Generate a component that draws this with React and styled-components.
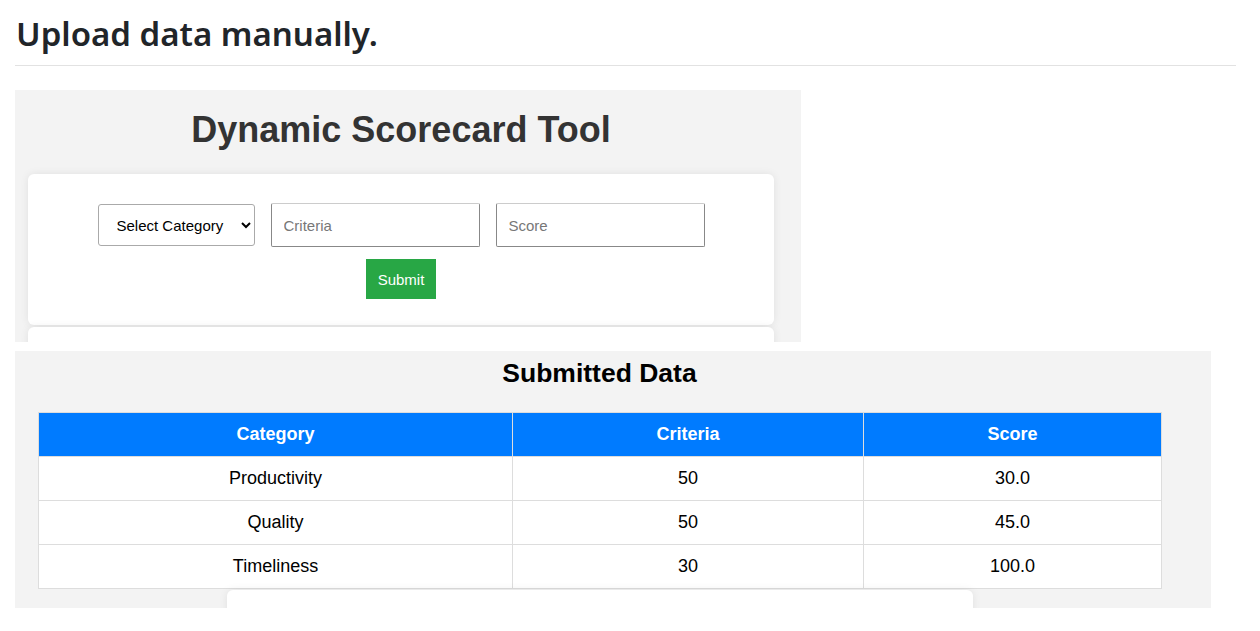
import React from 'react';
import styled, { createGlobalStyle } from 'styled-components';

const GlobalStyle = createGlobalStyle`
  body {
    margin: 0;
    background: #fff;
    font-family: "Liberation Sans", Arial, sans-serif;
  }
`

const rows = [
  { category: 'Productivity', criteria: '50', score: '30.0' },
  { category: 'Quality', criteria: '50', score: '45.0' },
  { category: 'Timeliness', criteria: '30', score: '100.0' },
];

const App = () => {
  return (
    <Page>
      <GlobalStyle />
      <PageTitle>Upload data manually.</PageTitle>
      <Rule />

      <FormFrame>
        <ToolTitle>Dynamic Scorecard Tool</ToolTitle>
        <Card>
          <FieldRow>
            <Select defaultValue="">
              <option value="">Select Category</option>
              <option>Productivity</option>
              <option>Quality</option>
              <option>Timeliness</option>
            </Select>
            <Input placeholder="Criteria" />
            <Input placeholder="Score" />
          </FieldRow>
          <SubmitButton>Submit</SubmitButton>
        </Card>
        <Card />
      </FormFrame>

      <TableFrame>
        <DataTitle>Submitted Data</DataTitle>
        <Table>
          <colgroup>
            <col style={{ width: 474 }} />
            <col style={{ width: 351 }} />
            <col style={{ width: 298 }} />
          </colgroup>
          <thead>
            <tr>
              <Th>Category</Th>
              <Th>Criteria</Th>
              <Th>Score</Th>
            </tr>
          </thead>
          <tbody>
            {rows.map((r) => (
              <tr key={r.category}>
                <Td>{r.category}</Td>
                <Td>{r.criteria}</Td>
                <Td>{r.score}</Td>
              </tr>
            ))}
          </tbody>
        </Table>
        <TrailingCard />
      </TableFrame>
    </Page>
  );
};

export default App;

const Page = styled.div`
  padding: 0 24px 0 15px;
`
const PageTitle = styled.h2`
  margin: 0;
  padding-top: 11px;
  font-family: "Noto Sans", "Open Sans", sans-serif;
  font-weight: 600;
  font-size: 33px;
  line-height: 45px;
  color: #212529;
  padding-left: 1px;
`
const Rule = styled.hr`
  margin: 9px 0 24px;
  border: 0;
  border-top: 1px solid #e2e2e2;
`
const FormFrame = styled.div`
  width: 786px;
  height: 252px;
  background: #f3f3f3;
  overflow: hidden;
  padding: 0 27px 0 13px;
  box-sizing: border-box;
`
const ToolTitle = styled.h1`
  margin: 0;
  padding: 20px 0 24px;
  text-align: center;
  font-size: 36px;
  line-height: 40px;
  font-weight: bold;
  color: #333;
`
const Card = styled.div`
  background: #fff;
  border-radius: 6px;
  box-shadow: 0 0 8px rgba(0, 0, 0, 0.08);
  padding: 29px 0 26px;
  margin-bottom: 2px;
  display: flex;
  flex-direction: column;
  align-items: center;
  gap: 12px;
  min-height: 16px;
  box-sizing: border-box;
`
const FieldRow = styled.div`
  display: flex;
  align-items: center;
  gap: 16px;
`
const Select = styled.select`
  width: 157px;
  height: 42px;
  padding: 0 10px 0 14px;
  font-family: "Liberation Sans", Arial, sans-serif;
  font-size: 15px;
  color: #000;
  background: #fff;
  border: 1px solid #aaa;
  border-radius: 3px;
`
const Input = styled.input`
  width: 209px;
  height: 44px;
  padding: 0 12px;
  box-sizing: border-box;
  font-family: "Liberation Sans", Arial, sans-serif;
  font-size: 15px;
  border: 1px solid #888;
  border-top-color: #ccc;
  border-radius: 2px;
  &::placeholder {
    color: #777;
  }
`
const SubmitButton = styled.button`
  width: 70px;
  height: 40px;
  background: #28a745;
  color: #fff;
  border: 0;
  font-family: "Liberation Sans", Arial, sans-serif;
  font-size: 15px;
`
const TableFrame = styled.div`
  margin-top: 9px;
  width: 1196px;
  height: 257px;
  background: #f3f3f3;
  overflow: hidden;
  padding: 0 50px 0 23px;
  box-sizing: border-box;
`
const DataTitle = styled.h2`
  margin: 0;
  padding: 9px 0 25px;
  text-align: center;
  font-size: 26.5px;
  line-height: 27px;
  font-weight: bold;
  color: #000;
`
const Table = styled.table`
  width: 1123px;
  border-collapse: collapse;
  background: #fff;
  table-layout: fixed;
`
const Th = styled.th`
  background: #007bff;
  color: #fff;
  font-size: 18px;
  font-weight: bold;
  height: 43px;
  padding: 0 12px;
  border: 1px solid #ddd;
  text-align: center;
`
const Td = styled.td`
  font-size: 18px;
  color: #000;
  height: 43px;
  padding: 0 12px;
  border: 1px solid #ddd;
  text-align: center;
`
const TrailingCard = styled.div`
  margin: 1px 0 0 189px;
  width: 746px;
  height: 40px;
  background: #fff;
  border-radius: 6px;
  box-shadow: 0 0 8px rgba(0, 0, 0, 0.08);
`
